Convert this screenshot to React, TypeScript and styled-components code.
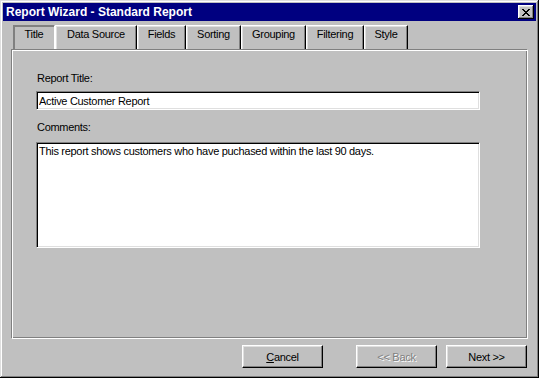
import React from "react";
import styled, { createGlobalStyle } from "styled-components";

const GlobalStyle = createGlobalStyle`
  html, body {
    margin: 0;
    padding: 0;
    background: #c0c0c0;
  }
  body {
    font-family: "Liberation Sans", Arial, sans-serif;
    font-size: 11px;
    letter-spacing: -0.3px;
    color: #000;
  }
`;

const Window = styled.div`
  width: 539px;
  height: 378px;
  box-sizing: border-box;
  padding: 3px;
  background: #c0c0c0;
  display: flex;
  flex-direction: column;
  box-shadow: inset -1px -1px #000, inset 1px 1px #dfdfdf,
    inset -2px -2px #808080, inset 2px 2px #fff;
`;

const TitleBar = styled.div`
  height: 18px;
  flex: none;
  background: #000080;
  color: #fff;
  display: flex;
  align-items: center;
  justify-content: space-between;
  padding: 0 2px 0 3px;
  font-weight: 700;
  font-size: 12px;
  line-height: 14px;
  letter-spacing: 0;
`;

const CloseButton = styled.div`
  width: 16px;
  height: 14px;
  box-sizing: border-box;
  background: #c0c0c0;
  display: flex;
  align-items: center;
  justify-content: center;
  box-shadow: inset -1px -1px #000, inset 1px 1px #fff,
    inset -2px -2px #808080, inset 2px 2px #dfdfdf;
`;

const Body = styled.div`
  flex: 1;
  display: flex;
  flex-direction: column;
  padding: 4px 8px 0;
`;

const TabRow = styled.div`
  display: flex;
  height: 24px;
  padding-left: 2px;
  flex: none;
`;

const Tab = styled.div<{ $w: number; $active?: boolean }>`
  width: ${(p) => p.$w}px;
  height: 24px;
  box-sizing: border-box;
  display: flex;
  justify-content: center;
  padding-top: 2px;
  line-height: 13px;
  border-top: 1px solid ${(p) => (p.$active ? "#808080" : "#fff")};
  border-left: 1px solid ${(p) => (p.$active ? "#808080" : "#fff")};
  border-right: 1px solid ${(p) => (p.$active ? "#fff" : "#000")};
  box-shadow: ${(p) =>
    p.$active
      ? "inset 1px 1px #808080"
      : "inset -1px 0 #808080, inset 1px 1px #dfdfdf"};
`;

const Panel = styled.div`
  height: 290px;
  box-sizing: border-box;
  border: 1px solid;
  border-color: #808080 #fff #fff #808080;
  box-shadow: inset 1px 1px #fff, inset -1px -1px #808080;
  padding: 22px 24px 0;
  display: flex;
  flex-direction: column;
`;

const Label = styled.div`
  line-height: 13px;
  padding-left: 1px;
`;

const fieldBorder = `
  box-sizing: border-box;
  border: 1px solid;
  border-color: #808080 #fff #fff #808080;
  box-shadow: inset 1px 1px #000, inset -1px -1px #dfdfdf;
  background: #fff;
  font-family: "Liberation Sans", Arial, sans-serif;
  font-size: 11px;
  letter-spacing: -0.3px;
  color: #000;
  outline: none;
  margin: 0;
`;

const TextField = styled.input`
  ${fieldBorder}
  width: 444px;
  height: 19px;
  padding: 0 2px;
  margin-top: 6px;
`;

const TextArea = styled.textarea`
  ${fieldBorder}
  width: 444px;
  height: 106px;
  padding: 2px 2px;
  margin-top: 8px;
  resize: none;
  line-height: 13px;
  overflow: hidden;
`;

const CommentsLabel = styled(Label)`
  margin-top: 11px;
`;

const ButtonRow = styled.div`
  display: flex;
  justify-content: flex-end;
  padding: 6px 1px 0 0;
`;

const Button = styled.button<{ $gap?: number }>`
  width: 81px;
  height: 23px;
  box-sizing: border-box;
  margin-left: ${(p) => p.$gap ?? 0}px;
  padding: 0;
  background: #c0c0c0;
  border: 1px solid;
  border-color: #fff #000 #000 #fff;
  box-shadow: inset -1px -1px #808080, inset 1px 1px #dfdfdf;
  font-family: "Liberation Sans", Arial, sans-serif;
  font-size: 11px;
  letter-spacing: -0.3px;
  color: #000;
  &:disabled {
    color: #808080;
    text-shadow: 1px 1px #fff;
  }
  u {
    text-decoration: underline;
  }
`;

const tabs = [
  { label: "Title", w: 42, active: true },
  { label: "Data Source", w: 82 },
  { label: "Fields", w: 49 },
  { label: "Sorting", w: 55 },
  { label: "Grouping", w: 65 },
  { label: "Filtering", w: 58 },
  { label: "Style", w: 44 },
];

const App = () => {
  return (
    <>
      <GlobalStyle />
      <Window>
        <TitleBar>
          <span>Report Wizard - Standard Report</span>
          <CloseButton>
            <svg width="8" height="7" viewBox="0 0 8 7">
              <path
                d="M0 0h2v1h1v1h2V1h1V0h2v1H7v1H6v1H5v1h1v1h1v1h1v1H6V6H5V5H3v1H2v1H0V6h1V5h1V4h1V3H2V2H1V1H0z"
                fill="#000"
              />
            </svg>
          </CloseButton>
        </TitleBar>
        <Body>
          <TabRow>
            {tabs.map((t) => (
              <Tab key={t.label} $w={t.w} $active={t.active}>
                {t.label}
              </Tab>
            ))}
          </TabRow>
          <Panel>
            <Label>Report Title:</Label>
            <TextField readOnly value="Active Customer Report" />
            <CommentsLabel>Comments:</CommentsLabel>
            <TextArea
              readOnly
              value="This report shows customers who have puchased within the last 90 days."
            />
          </Panel>
          <ButtonRow>
            <Button>
              <u>C</u>ancel
            </Button>
            <Button $gap={33} disabled>
              &lt;&lt; Back
            </Button>
            <Button $gap={9}>Next &gt;&gt;</Button>
          </ButtonRow>
        </Body>
      </Window>
    </>
  );
};

export default App;
